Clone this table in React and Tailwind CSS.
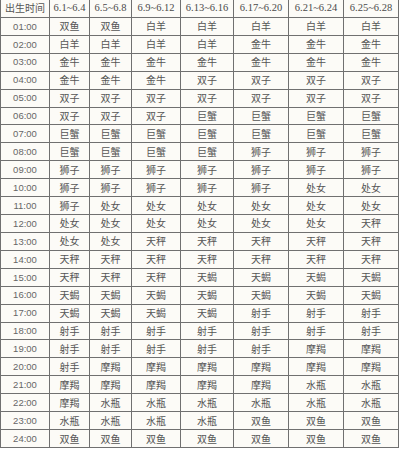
import React from 'react';

const cols = ['6.1~6.4', '6.5~6.8', '6.9~6.12', '6.13~6.16', '6.17~6.20', '6.21~6.24', '6.25~6.28'];

const rows = [
    ['01:00', '双鱼 双鱼 白羊 白羊 白羊 白羊 白羊'],
    ['02:00', '白羊 白羊 白羊 白羊 金牛 金牛 金牛'],
    ['03:00', '金牛 金牛 金牛 金牛 金牛 金牛 金牛'],
    ['04:00', '金牛 金牛 金牛 双子 双子 双子 双子'],
    ['05:00', '双子 双子 双子 双子 双子 双子 双子'],
    ['06:00', '双子 双子 双子 巨蟹 巨蟹 巨蟹 巨蟹'],
    ['07:00', '巨蟹 巨蟹 巨蟹 巨蟹 巨蟹 巨蟹 巨蟹'],
    ['08:00', '巨蟹 巨蟹 巨蟹 巨蟹 狮子 狮子 狮子'],
    ['09:00', '狮子 狮子 狮子 狮子 狮子 狮子 狮子'],
    ['10:00', '狮子 狮子 狮子 狮子 狮子 处女 处女'],
    ['11:00', '狮子 处女 处女 处女 处女 处女 处女'],
    ['12:00', '处女 处女 处女 处女 处女 处女 天秤'],
    ['13:00', '处女 处女 天秤 天秤 天秤 天秤 天秤'],
    ['14:00', '天秤 天秤 天秤 天秤 天秤 天秤 天秤'],
    ['15:00', '天秤 天秤 天秤 天蝎 天蝎 天蝎 天蝎'],
    ['16:00', '天蝎 天蝎 天蝎 天蝎 天蝎 天蝎 天蝎'],
    ['17:00', '天蝎 天蝎 天蝎 天蝎 射手 射手 射手'],
    ['18:00', '射手 射手 射手 射手 射手 射手 射手'],
    ['19:00', '射手 射手 射手 射手 射手 摩羯 摩羯'],
    ['20:00', '射手 摩羯 摩羯 摩羯 摩羯 摩羯 摩羯'],
    ['21:00', '摩羯 摩羯 摩羯 摩羯 摩羯 水瓶 水瓶'],
    ['22:00', '摩羯 水瓶 水瓶 水瓶 水瓶 水瓶 水瓶'],
    ['23:00', '水瓶 水瓶 水瓶 水瓶 双鱼 双鱼 双鱼'],
    ['24:00', '双鱼 双鱼 双鱼 双鱼 双鱼 双鱼 双鱼'],
];

const cell = 'flex items-center justify-center border-r border-b border-[#707070] leading-none whitespace-nowrap overflow-hidden';
const cjk = "font-['Noto_Sans_CJK_SC',sans-serif] text-[10px] text-[#555]";

export default function App() {
    return (
        <div className="w-[400px] h-[450px] bg-white">
            <div className="grid grid-cols-[49px_40px_42px_49px_53px_55px_55px_55px] grid-rows-[repeat(25,1fr)] h-[448px] w-[399px] border-l border-[#707070] bg-[#fcfbf7]">
                <div className={`${cell} ${cjk} text-[#4a4a4a]`}>出生时间</div>
                {cols.map(c => (
                    <div key={c} className={`${cell} font-['Liberation_Serif',serif] text-[10.5px] text-[#4a4a4a]`}>{c}</div>
                ))}
                {rows.map(([time, signs]) => (
                    <React.Fragment key={time}>
                        <div className={`${cell} font-['Liberation_Sans',sans-serif] text-[9.5px] text-[#666]`}>{time}</div>
                        {signs.split(' ').map((s, i) => (
                            <div key={i} className={`${cell} ${cjk}`}>{s}</div>
                        ))}
                    </React.Fragment>
                ))}
            </div>
        </div>
    );
}
